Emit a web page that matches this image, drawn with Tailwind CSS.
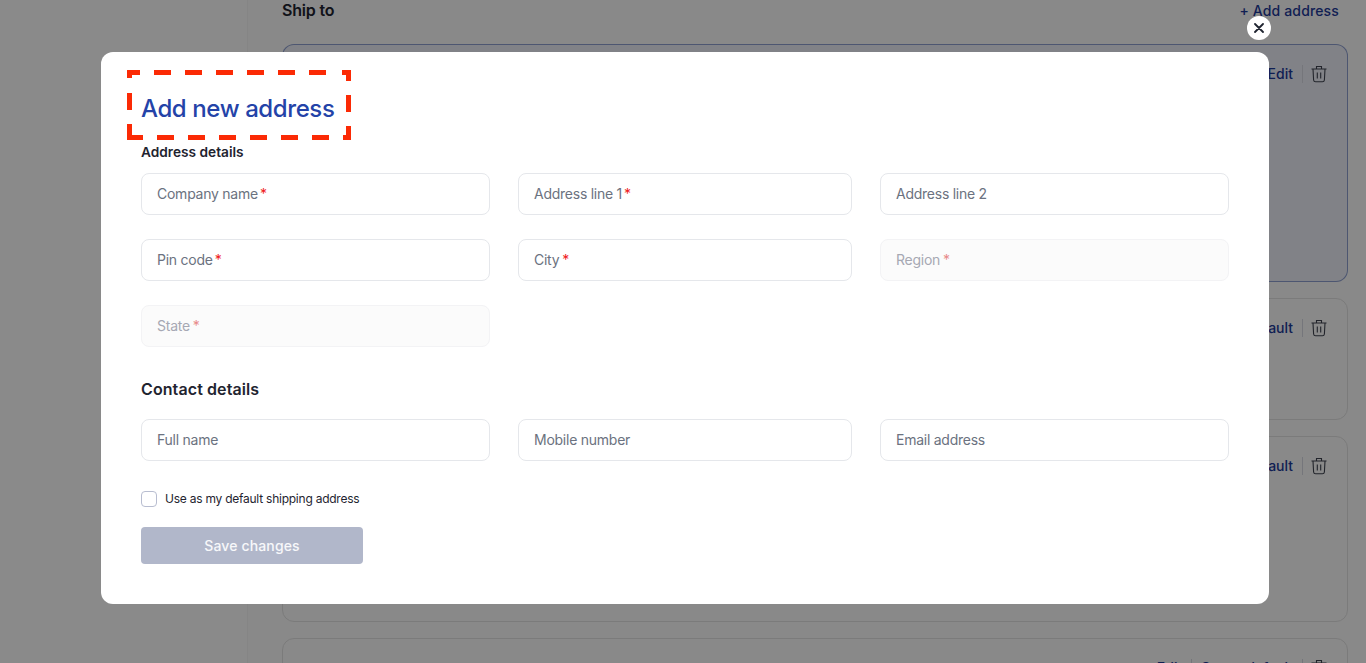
<!DOCTYPE html>
<html>
<head>
<meta charset="utf-8">
<script src="https://cdn.jsdelivr.net/npm/@tailwindcss/browser@4"></script>
</head>
<body class="font-['Inter','Noto_Sans',sans-serif] bg-white">
<div class="relative h-[663px] w-[1366px] overflow-hidden">
  <div class="flex h-full">
    <aside class="w-[248px] shrink-0 bg-[#ffffff] border-r border-[#f6f6f6]"></aside>
    <main class="flex-1 pl-[34px] pr-[18px] bg-[#fdfdfd]">
      <div class="flex items-center justify-between h-[21px] mb-[23px]">
        <h2 class="text-base font-semibold text-[#1f2430] -mt-[1px] tracking-[-0.2px]">Ship to</h2>
        <a class="text-sm font-medium text-[#1e3a9a] pr-[9px] tracking-[0.15px]">+ Add address</a>
      </div>
      <div class="flex flex-col gap-4">
        <section class="h-[238px] rounded-xl border border-[#2f4fa8]/50 bg-[#eff1fa] flex justify-end pt-[20px] pr-[20px]">
          <div class="flex items-start h-[18px]">
            <span class="text-sm leading-[18px] font-medium text-[#1e3a9a] pr-[9px] border-r border-[#d9dbe3]">Edit</span>
            <svg class="ml-[8px]" width="16" height="18" viewBox="0 0 16 18" fill="none" stroke="#3f4450" stroke-width="1.1"><path d="M0.5 4h15M5.5 4V1.5h5V4M2 4l.6 11a2 2 0 0 0 2 1.8h6.8a2 2 0 0 0 2-1.8L14 4M6.3 7.5v6M9.7 7.5v6"/></svg>
          </div>
        </section>
        <section class="h-[122px] rounded-xl border border-[#e3e3e3] flex justify-end pt-[20px] pr-[20px]">
          <div class="flex items-start h-[18px]">
            <span class="text-sm leading-[18px] font-medium text-[#1e3a9a] pr-[9px] border-r border-[#d9dbe3]">Set as default</span>
            <svg class="ml-[8px]" width="16" height="18" viewBox="0 0 16 18" fill="none" stroke="#3f4450" stroke-width="1.1"><path d="M0.5 4h15M5.5 4V1.5h5V4M2 4l.6 11a2 2 0 0 0 2 1.8h6.8a2 2 0 0 0 2-1.8L14 4M6.3 7.5v6M9.7 7.5v6"/></svg>
          </div>
        </section>
        <section class="h-[186px] rounded-xl border border-[#e3e3e3] flex justify-end pt-[20px] pr-[20px]">
          <div class="flex items-start h-[18px]">
            <span class="text-sm leading-[18px] font-medium text-[#1e3a9a] pr-[9px] border-r border-[#d9dbe3]">Set as default</span>
            <svg class="ml-[8px]" width="16" height="18" viewBox="0 0 16 18" fill="none" stroke="#3f4450" stroke-width="1.1"><path d="M0.5 4h15M5.5 4V1.5h5V4M2 4l.6 11a2 2 0 0 0 2 1.8h6.8a2 2 0 0 0 2-1.8L14 4M6.3 7.5v6M9.7 7.5v6"/></svg>
          </div>
        </section>
        <section class="h-[122px] rounded-xl border border-[#e3e3e3] flex justify-end pt-[20px] pr-[20px]">
          <div class="flex items-start h-[18px]">
            <span class="text-sm leading-[18px] font-medium text-[#1e3a9a] pr-[9px] border-r border-[#d9dbe3]">Edit</span>
            <span class="text-sm leading-[18px] font-medium text-[#1e3a9a] px-[9px] border-r border-[#d9dbe3]">Set as default</span>
            <svg class="ml-[8px]" width="16" height="18" viewBox="0 0 16 18" fill="none" stroke="#3f4450" stroke-width="1.1"><path d="M0.5 4h15M5.5 4V1.5h5V4M2 4l.6 11a2 2 0 0 0 2 1.8h6.8a2 2 0 0 0 2-1.8L14 4M6.3 7.5v6M9.7 7.5v6"/></svg>
          </div>
        </section>
      </div>
    </main>
  </div>

  <div class="absolute inset-0 bg-black/46"></div>

  <div class="absolute left-[101px] top-[52px] w-[1168px] h-[552px] bg-white rounded-xl px-10 pt-[42px]">
    <h1 class="text-2xl leading-[30px] font-medium text-[#2443a8] tracking-[-0.4px]">Add new address</h1>
    <h3 class="mt-[18px] text-[13.7px] leading-[20px] font-semibold text-[#1f2430]">Address details</h3>
    <div class="mt-[11px] grid grid-cols-[349px_334px_349px] gap-x-7 gap-y-6 text-sm text-[#6b7280] tracking-[-0.25px]">
      <div class="h-[42px] px-[15px] flex items-center rounded-lg border border-[#e5e7eb]">Company name<span class="ml-[2px] text-[#ef2020]">*</span></div>
      <div class="h-[42px] px-[15px] flex items-center rounded-lg border border-[#e5e7eb]">Address line 1<span class="ml-[2px] text-[#ef2020]">*</span></div>
      <div class="h-[42px] px-[15px] flex items-center rounded-lg border border-[#e5e7eb]">Address line 2</div>
      <div class="h-[42px] px-[15px] flex items-center rounded-lg border border-[#e5e7eb]">Pin code<span class="ml-[2px] text-[#ef2020]">*</span></div>
      <div class="h-[42px] px-[15px] flex items-center rounded-lg border border-[#e5e7eb]">City<span class="ml-[3px] text-[#ef2020]">*</span></div>
      <div class="h-[42px] px-[15px] flex items-center rounded-lg border border-[#f3f3f5] bg-[#fbfbfb] text-[#a6a8b3]">Region<span class="ml-[3px] text-[#e88a8a]">*</span></div>
      <div class="h-[42px] px-[15px] flex items-center rounded-lg border border-[#f3f3f5] bg-[#fbfbfb] text-[#a6a8b3]">State<span class="ml-[3px] text-[#e88a8a]">*</span></div>
    </div>
    <h3 class="mt-[31px] text-base leading-[22px] font-semibold text-[#1f2430] tracking-[0.1px]">Contact details</h3>
    <div class="mt-[19px] grid grid-cols-[349px_334px_349px] gap-x-7 text-sm text-[#6b7280] tracking-[-0.25px]">
      <div class="h-[42px] px-[15px] flex items-center rounded-lg border border-[#e5e7eb]">Full name</div>
      <div class="h-[42px] px-[15px] flex items-center rounded-lg border border-[#e5e7eb]">Mobile number</div>
      <div class="h-[42px] px-[15px] flex items-center rounded-lg border border-[#e5e7eb]">Email address</div>
    </div>
    <label class="mt-[30px] flex items-center gap-2 h-4 text-xs text-[#1f2430] tracking-[-0.24px]">
      <span class="w-4 h-4 rounded-[4px] border border-[#b8bdd0] bg-white"></span>
      <span>Use as my default shipping address</span>
    </label>
    <button class="mt-5 w-[222px] h-[37px] rounded bg-[#b1b7ca] text-sm font-medium text-white/90 tracking-[0.15px]">Save changes</button>
  </div>

  <button class="absolute left-[1247px] top-4 w-6 h-6 rounded-full bg-white flex items-center justify-center">
    <svg width="10" height="10" viewBox="0 0 10 10" fill="none" stroke="#1f2430" stroke-width="1.8" stroke-linecap="round"><path d="M1 1l8 8M9 1L1 9"/></svg>
  </button>

  <svg class="absolute left-[127px] top-[70px]" width="224" height="70" viewBox="0 0 224 70" fill="#fb2a05">
    <rect x="0" y="0" width="13" height="5"/><rect x="27" y="0" width="17" height="5"/><rect x="58" y="0" width="17" height="5"/><rect x="89" y="0" width="17" height="5"/><rect x="120" y="0" width="17" height="5"/><rect x="151" y="0" width="17" height="5"/><rect x="182" y="0" width="17" height="5"/><rect x="215" y="0" width="9" height="5"/>
    <rect x="0" y="65" width="16" height="5"/><rect x="30" y="65" width="17" height="5"/><rect x="61" y="65" width="17" height="5"/><rect x="92" y="65" width="17" height="5"/><rect x="123" y="65" width="17" height="5"/><rect x="154" y="65" width="17" height="5"/><rect x="185" y="65" width="17" height="5"/><rect x="216" y="65" width="8" height="5"/>
    <rect x="0" y="0" width="5" height="8"/><rect x="0" y="23" width="5" height="17"/><rect x="0" y="54" width="5" height="16"/>
    <rect x="219" y="0" width="5" height="11"/><rect x="219" y="25" width="5" height="17"/><rect x="219" y="56" width="5" height="14"/>
  </svg>
</div>
</body>
</html>
